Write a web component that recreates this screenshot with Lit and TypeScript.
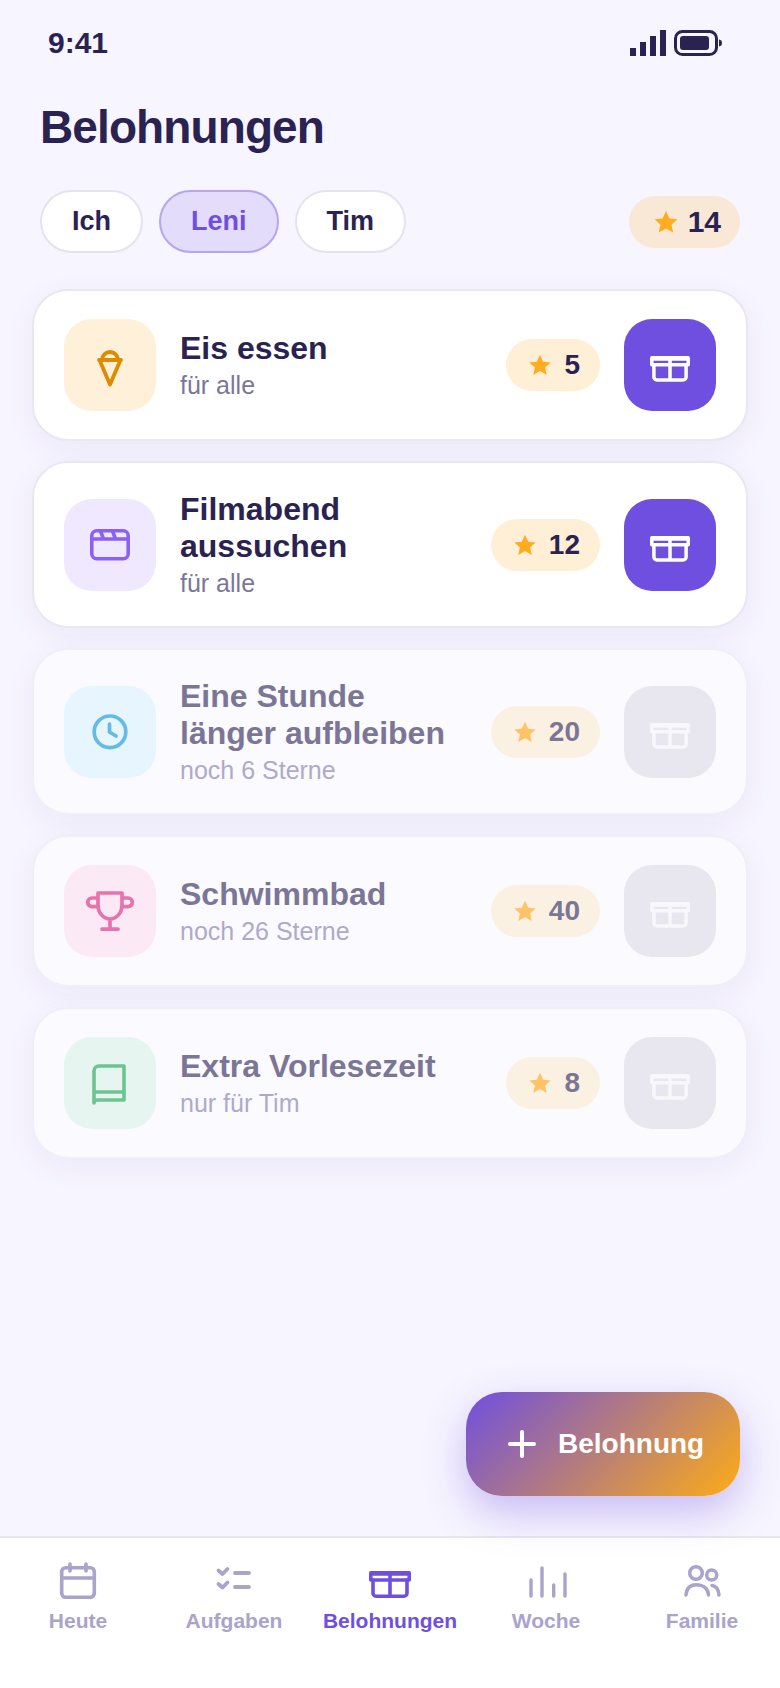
import { LitElement, html, css } from "lit";
import { customElement } from "lit/decorators.js";

const star = html`<svg class="star" viewBox="0 0 28 28"><path fill="currentColor" d="M14 3.800l3.200 6.900 7.500.8-5.600 5 1.600 7.400L14 20.100l-6.700 3.800 1.600-7.400-5.600-5 7.500-.8z"/></svg>`;

const giftIcon = html`<svg class="gift" viewBox="0 -12 40 42" fill="none" stroke="currentColor" stroke-width="3.500" stroke-linejoin="round" stroke-linecap="round">
  <path d="M1.800 1.800h36.400v7H1.800zM1.800 3h36.400" />
  <path d="M3.900 8.800v12.200a3 3 0 0 0 3 3h26.200a3 3 0 0 0 3-3V8.800M20 1.800v22.200" />
</svg>`;

interface Reward { title: string[]; sub: string; stars: number; icon: string; bg: string; fg: string; locked: boolean; }

const icons: Record<string, unknown> = {
  ice: html`<svg viewBox="0 0 44 44" fill="none" stroke="currentColor" stroke-width="3.800" stroke-linejoin="round" stroke-linecap="round"><path d="M11 17h22M11.500 17L22 41.500 32.500 17M14 17a8 8 0 0 1 16 0"/></svg>`,
  film: html`<svg viewBox="0 0 44 44" fill="none" stroke="currentColor" stroke-width="3.600" stroke-linejoin="round" stroke-linecap="round"><rect x="3.800" y="7.800" width="36.400" height="28" rx="5"/><path d="M3.800 16h36.400M12.500 8l3 8M24.500 8l3 8"/></svg>`,
  clock: html`<svg viewBox="0 0 44 44" fill="none" stroke="currentColor" stroke-width="3.700" stroke-linejoin="round" stroke-linecap="round"><circle cx="22" cy="21.800" r="15.800"/><path d="M21.500 14v8l6.500 4"/></svg>`,
  trophy: html`<svg viewBox="0 0 52 52" fill="none" stroke="currentColor" stroke-width="3.700" stroke-linejoin="round" stroke-linecap="round"><path d="M14 8h24v12a12 14 0 0 1-24 0zM14 13H8a4.300 4.300 0 0 0 0 8.600h6.500M38 13h6a4.300 4.300 0 0 1 0 8.600h-6.500M26 34v10M18 44.200h16"/></svg>`,
  book: html`<svg viewBox="0 0 44 44" fill="none" stroke="currentColor" stroke-width="3.600" stroke-linejoin="round" stroke-linecap="round"><path d="M6 42V10a5 5 0 0 1 5-5h25v34H9a3 3 0 0 0-3 3zM6 31h30"/></svg>`,
};

const rewards: Reward[] = [
  { title: ["Eis essen"], sub: "für alle", stars: 5, icon: "ice", bg: "#fff0d9", fg: "#dd8c00", locked: false },
  { title: ["Filmabend", "aussuchen"], sub: "für alle", stars: 12, icon: "film", bg: "#efe8ff", fg: "#8b60f5", locked: false },
  { title: ["Eine Stunde", "länger aufbleiben"], sub: "noch 6 Sterne", stars: 20, icon: "clock", bg: "#e6f5fe", fg: "#64bce6", locked: true },
  { title: ["Schwimmbad"], sub: "noch 26 Sterne", stars: 40, icon: "trophy", bg: "#fbeaf5", fg: "#e873ac", locked: true },
  { title: ["Extra Vorlesezeit"], sub: "nur für Tim", stars: 8, icon: "book", bg: "#e6f5ef", fg: "#6cc492", locked: true },
];

const navIcons: Record<string, unknown> = {
  Heute: html`<svg viewBox="0 0 40 40" fill="none" stroke="currentColor" stroke-width="3.600" stroke-linejoin="round" stroke-linecap="round"><rect x="3.700" y="5.700" width="32.600" height="29.600" rx="4"/><path d="M3.700 16h32.600M12 2v7M28 2v7"/></svg>`,
  Aufgaben: html`<svg viewBox="0 0 40 40" fill="none" stroke="currentColor" stroke-width="3.800" stroke-linejoin="round" stroke-linecap="round"><path d="M4.500 8.500l4 3.500 5-5M4.500 22l4 3.500 5-5M21 11h14M21 25h14"/></svg>`,
  Belohnungen: html`<svg viewBox="0 -9 42 40" fill="none" stroke="currentColor" stroke-width="3.600" stroke-linejoin="round" stroke-linecap="round"><path d="M1.800 1.800h38.400v7.200H1.800zM1.800 3h38.400"/><path d="M4 9v13.200a3 3 0 0 0 3 3h28a3 3 0 0 0 3-3V9M21 1.800v23.400"/></svg>`,
  Woche: html`<svg viewBox="0 0 40 40" fill="none" stroke="currentColor" stroke-width="3.400" stroke-linecap="round"><path d="M5 18v16M16 6v28M27.700 23v11M39 12v22"/></svg>`,
  Familie: html`<svg viewBox="0 0 40 40" fill="none" stroke="currentColor" stroke-width="3.500" stroke-linejoin="round" stroke-linecap="round"><circle cx="14" cy="11" r="6.300"/><circle cx="29.700" cy="13" r="5"/><path d="M4 33c.5-7 4.500-10.300 10.500-10.300S26 26 26.500 33M30 23.500c4 .5 6.500 4 7 9.500"/></svg>`,
};

@customElement("app-root")
export class AppRoot extends LitElement {
  static styles = css`
    :host { display: block; }
    * { box-sizing: border-box; }
    .screen { position: relative; display: flex; flex-direction: column; height: 1688px; width: 780px; overflow: hidden; background: #f7f5ff; color: #2a2352; font-family: "Liberation Sans", Arial, sans-serif; }
    .status { display: flex; justify-content: space-between; align-items: center; padding: 26px 58px 0 48px; height: 60px; flex: none; }
    .time { font-size: 30px; font-weight: 700; line-height: 34px; }
    .status-icons { display: flex; gap: 8px; align-items: center; }
    .signal { display: flex; align-items: flex-end; gap: 3.5px; height: 26px; }
    .signal i { display: block; width: 6.5px; background: #2a2352; }
    .signal i:nth-child(1) { height: 8px; }
    .signal i:nth-child(2) { height: 14px; }
    .signal i:nth-child(3) { height: 20px; }
    .signal i:nth-child(4) { height: 26px; }
    .battery { display: block; width: 48px; height: 26px; }
    h1 { margin: 39px 0 0 40px; font-size: 46px; line-height: 56px; font-weight: 700; letter-spacing: -0.9px; }
    .row { display: flex; align-items: center; gap: 16px; margin: 35px 40px 0; }
    .chip { height: 63px; border: 2px solid #e5e3ec; border-radius: 32px; background: #fff; padding: 0 30px; font-size: 27px; font-weight: 700; display: flex; align-items: center; }
    .chip.on { background: #e3dcfa; border-color: #b7a5f0; color: #6f4fe0; }
    .spacer { flex: 1; }
    .pill { display: flex; align-items: center; gap: 10px; height: 52px; padding: 0 20px; border-radius: 26px; background: #ffefd6; font-size: 28px; font-weight: 700; flex: none; }
    .pill.top { background: #f9e8d6; font-size: 30px; padding: 0 19px 0 20px; }
    .star { width: 28px; height: 28px; color: #ffad1f; flex: none; display: block; }
    .pill.top .star { width: 30px; height: 30px; margin-right: -3px; margin-left: 2px; }
    .list { display: flex; flex-direction: column; gap: 20px; margin: 36px 32px 0; flex: 1; }
    .card { display: flex; align-items: center; padding: 28px 30px; border: 2px solid #e9e7f0; border-radius: 36px; background: #fff; box-shadow: 0 8px 32px rgba(60, 40, 140, 0.06); }
    .card.locked { background: #fbfaff; border-color: #f0eef6; }
    .icon { width: 92px; height: 92px; border-radius: 28px; display: flex; align-items: center; justify-content: center; flex: none; }
    .icon svg { width: 44px; height: 44px; display: block; overflow: visible; }
    .icon.trophy svg { width: 52px; height: 52px; }
    .text { flex: 1; min-width: 0; margin-left: 24px; }
    .title { font-size: 32px; line-height: 37px; font-weight: 700; }
    .sub { margin-top: 4px; font-size: 25px; line-height: 29px; color: #7c7699; }
    .btn { width: 92px; height: 92px; border-radius: 28px; margin-left: 24px; background: #6f4fe0; color: #fff; display: flex; align-items: center; justify-content: center; flex: none; }
    .gift { width: 40px; height: 42px; display: block; }
    .locked .title { color: #7b7695; }
    .locked .sub { color: #aeaaca; }
    .locked .pill { background: #fbf1e3; color: #7b7695; }
    .locked .star { color: #ffc266; }
    .locked .btn { background: #e8e6ef; color: #f8f7fb; }
    .fab { position: absolute; right: 40px; bottom: 192px; z-index: 2; width: 274px; height: 104px; border-radius: 36px; background: linear-gradient(135deg, #6f4fe0 0%, #f5a623 94%); color: #fff; display: flex; align-items: center; gap: 22px; padding: 0 0 0 42px; font-size: 28px; font-weight: 700; box-shadow: 0 16px 40px rgba(111, 79, 224, 0.35); }
    .fab svg { width: 28px; height: 28px; display: block; flex: none; }
    .nav { flex: none; height: 152px; background: #fff; border-top: 2px solid #e8e6f0; display: grid; grid-template-columns: repeat(5, 1fr); padding-top: 24px; }
    .nav-item { display: flex; flex-direction: column; align-items: center; gap: 7px; color: #aaa3cc; font-size: 21px; font-weight: 700; line-height: 24px; white-space: nowrap; }
    .nav-item.on { color: #6f4fe0; }
    .nav-item svg { width: 40px; height: 40px; display: block; overflow: visible; flex: none; }
    .nav-item.on svg { width: 42px; }
  `;

  render() {
    return html`<div class="screen">
      <div class="status">
        <span class="time">9:41</span>
        <div class="status-icons">
          <div class="signal"><i></i><i></i><i></i><i></i></div>
          <svg class="battery" viewBox="0 0 48 26" fill="none"><rect x="1.500" y="1.500" width="41" height="23" rx="7" stroke="#2a2352" stroke-width="3"/><rect x="6" y="6" width="29" height="14" rx="3" fill="#2a2352"/><path d="M45 9.500c2 .3 3 1.500 3 3.500s-1 3.200-3 3.500z" fill="#2a2352"/></svg>
        </div>
      </div>
      <h1>Belohnungen</h1>
      <div class="row">
        <div class="chip">Ich</div>
        <div class="chip on">Leni</div>
        <div class="chip">Tim</div>
        <div class="spacer"></div>
        <div class="pill top">${star}<span>14</span></div>
      </div>
      <div class="list">
        ${rewards.map((r) => html`<div class="card ${r.locked ? "locked" : ""}">
          <div class="icon ${r.icon}" style="background:${r.bg};color:${r.fg}">${icons[r.icon]}</div>
          <div class="text">
            <div class="title">${r.title.map((t) => html`<div>${t}</div>`)}</div>
            <div class="sub">${r.sub}</div>
          </div>
          <div class="pill">${star}<span>${r.stars}</span></div>
          <div class="btn">${giftIcon}</div>
        </div>`)}
      </div>
      <div class="fab"><svg viewBox="0 0 28 28" fill="none" stroke="currentColor" stroke-width="4" stroke-linecap="round"><path d="M14 2v24M2 14h24"/></svg><span>Belohnung</span></div>
      <div class="nav">
        ${["Heute", "Aufgaben", "Belohnungen", "Woche", "Familie"].map((n) => html`<div class="nav-item ${n === "Belohnungen" ? "on" : ""}">${navIcons[n]}<span>${n}</span></div>`)}
      </div>
    </div>`;
  }
}
